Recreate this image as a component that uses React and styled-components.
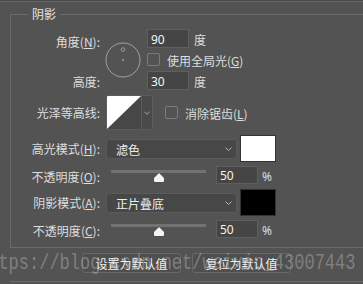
import React from 'react';
import styled, { createGlobalStyle } from 'styled-components';

const Global = createGlobalStyle`
  html, body { margin: 0; padding: 0; background: #535353; }
  body {
    width: 363px; height: 284px; overflow: hidden;
    font-family: "Noto Sans CJK SC", "Noto Sans", sans-serif;
    font-size: 12px; color: #dedede;
  }
  * { box-sizing: border-box; }
`;

const Page = styled.div`
  position: relative;
  width: 363px;
  height: 284px;
  overflow: hidden;
`;

const TopRule = styled.div`
  height: 2px;
  border-top: 1px solid #4a4a4a;
  border-bottom: 1px solid #666666;
`;

const Fieldset = styled.div`
  position: relative;
  margin: 12px 0 0 10px;
  border-top: 1px solid #6b6b6b;
  border-left: 1px solid #6b6b6b;
  border-bottom: 1px solid #6b6b6b;
  padding: 14px 0 9px 0;
`;

const Legend = styled.div`
  position: absolute;
  top: -8px;
  left: 17px;
  padding: 0 4px;
  background: #535353;
  line-height: 14px;
  font-size: 12px;
  color: #e4e4e4;
`;

const AngleGrid = styled.div`
  display: grid;
  grid-template-columns: 89px 41px auto;
  grid-template-rows: 19px 23px 19px;
`;

const Label = styled.div`
  width: 89px;
  flex: none;
  text-align: right;
  white-space: nowrap;
  line-height: ${p => p.$lh || 19}px;
  padding-top: ${p => p.$pt || 0}px;
  color: #dedede;
`;

const GridLabel = styled(Label)`
  grid-column: 1;
  grid-row: ${p => p.$row};
`;

const Key = styled.span`
  text-decoration: underline;
  text-underline-offset: 1px;
`;

const Dial = styled.svg`
  grid-column: 2;
  grid-row: 1 / span 3;
  margin: 13px 0 0 5px;
  display: block;
`;

const GridCell = styled.div`
  grid-column: 3;
  grid-row: ${p => p.$row};
  margin-left: 6px;
  display: flex;
  align-items: center;
`;

const Field = styled.div`
  width: 42px;
  height: ${p => p.$h || 19}px;
  flex: none;
  background: #454545;
  border: 1px solid #5f5f5f;
  color: #f4f4f4;
  font-family: "Noto Sans", sans-serif;
  font-size: 12px;
  line-height: ${p => (p.$h || 19) - 2}px;
  padding: 1px 0 0 3px;
`;

const Unit = styled.span`
  margin-left: ${p => p.$ml || 5}px;
  padding-top: 3px;
  line-height: 16px;
  color: #dedede;
`;

const Check = styled.div`
  width: 13px;
  height: 13px;
  flex: none;
  border: 1px solid #7c7c7c;
  border-radius: 2px;
  margin-left: ${p => p.$ml || 0}px;
`;

const CheckText = styled.span`
  margin-left: 7px;
  padding-top: 2px;
  white-space: nowrap;
`;

const Row = styled.div`
  display: flex;
  align-items: center;
  height: ${p => p.$h}px;
  margin-top: ${p => p.$mt}px;
`;

const Contour = styled.div`
  margin-left: 6px;
  width: 47px;
  height: 35px;
  display: flex;
  border: 1px solid #5c5c5c;
  border-radius: 2px;
  overflow: hidden;
  flex: none;
`;

const ContourPreview = styled.svg`
  display: block;
  width: 34px;
  height: 33px;
`;

const ContourDrop = styled.div`
  flex: 1;
  display: flex;
  align-items: center;
  justify-content: center;
  border-left: 1px solid #5c5c5c;
  background: #4a4a4a;
`;

const Select = styled.div`
  margin-left: 6px;
  width: 131px;
  height: 20px;
  flex: none;
  display: flex;
  align-items: center;
  justify-content: space-between;
  padding: 0 4px 0 9px;
  background: #474747;
  border: 1px solid #5a5a5a;
  border-radius: 3px;
  color: #ececec;
`;

const SelectText = styled.span`
  padding-top: 1px;
`;

const Swatch = styled.div`
  margin-left: 3px;
  width: 36px;
  height: 27px;
  flex: none;
  background: ${p => p.$color};
  border: 1px solid #333333;
`;

const Slider = styled.div`
  position: relative;
  margin-left: 11px;
  width: 95px;
  height: 18px;
  flex: none;
`;

const Track = styled.div`
  margin-top: 4px;
  height: 3px;
  background: #727272;
`;

const Thumb = styled.svg`
  position: absolute;
  top: 6px;
  display: block;
`;

const Percent = styled.span`
  margin-left: 4px;
  padding-top: 2px;
  font-family: "Noto Sans", sans-serif;
  color: #dedede;
`;

const Buttons = styled.div`
  display: flex;
  gap: 11px;
  padding-left: 82px;
  margin-top: 5px;
`;

const Button = styled.div`
  width: 99px;
  height: 20px;
  display: flex;
  align-items: center;
  justify-content: center;
  background: #4f4f4f;
  border: 1px solid #686868;
  border-radius: 3px;
  color: #f2f2f2;
  padding-top: 1px;
`;

const BottomRule = styled.div`
  margin: 8px 0 0 10px;
  border-top: 1px solid #6b6b6b;
`;

const Watermark = styled.div`
  position: absolute;
  left: -22px;
  top: 255px;
  font-family: "Liberation Mono", monospace;
  font-size: 17px;
  line-height: 20px;
  white-space: nowrap;
  color: rgba(200, 200, 200, 0.4);
  transform: scaleY(1.3);
  transform-origin: 0 14.5px;
  pointer-events: none;
`;

const Chevron = ({ w = 7 }) => (
  <svg width={w} height="4" viewBox="0 0 7 4">
    <path d="M0.5 0.5 L3.5 3.5 L6.5 0.5" fill="none" stroke="#b4b4b4" strokeWidth="1" />
  </svg>
);

const ThumbIcon = ({ left }) => (
  <Thumb width="12" height="11" viewBox="0 0 12 11" style={{ left }}>
    <path d="M6 0.5 L11.5 6 L11.5 9 Q11.5 10.5 10 10.5 L2 10.5 Q0.5 10.5 0.5 9 L0.5 6 Z" fill="#f4f4f4" stroke="#3a3a3a" strokeWidth="0.8" />
  </Thumb>
);

const OpacityRow = ({ label, mk, value, pos, mt }) => (
  <Row $h={18} $mt={mt}>
    <Label $lh={16} $pt={3}>{label}(<Key>{mk}</Key>):</Label>
    <Slider>
      <Track />
      <ThumbIcon left={pos} />
    </Slider>
    <Field $h={18} style={{ marginLeft: 10 }}>{value}</Field>
    <Percent>%</Percent>
  </Row>
);

const ModeRow = ({ label, mk, mode, color, mt }) => (
  <Row $h={27} $mt={mt}>
    <Label $lh={16} $pt={1}>{label}(<Key>{mk}</Key>):</Label>
    <Select>
      <SelectText>{mode}</SelectText>
      <Chevron />
    </Select>
    <Swatch $color={color} />
  </Row>
);

export default function App() {
  return (
    <Page>
      <Global />
      <TopRule />
      <Fieldset>
        <Legend>阴影</Legend>
        <AngleGrid>
          <GridLabel $row="1 / span 2" $lh={14} $pt={6}>角度(<Key>N</Key>):</GridLabel>
          <Dial width="36" height="36" viewBox="0 0 36 36">
            <circle cx="18" cy="18" r="17" fill="none" stroke="#a2a2a2" strokeWidth="1" />
            <circle cx="18" cy="7.5" r="1.8" fill="none" stroke="#a2a2a2" strokeWidth="0.9" />
            <circle cx="18" cy="18" r="1" fill="#a2a2a2" />
          </Dial>
          <GridCell $row={1}>
            <Field>90</Field>
            <Unit>度</Unit>
          </GridCell>
          <GridCell $row={2}>
            <Check />
            <CheckText>使用全局光(<Key>G</Key>)</CheckText>
          </GridCell>
          <GridLabel $row={3} $lh={16} $pt={3}>高度:</GridLabel>
          <GridCell $row={3}>
            <Field>30</Field>
            <Unit>度</Unit>
          </GridCell>
        </AngleGrid>

        <Row $h={35} $mt={5}>
          <Label $lh={16} $pt={1}>光泽等高线:</Label>
          <Contour>
            <ContourPreview viewBox="0 0 34 33" preserveAspectRatio="none">
              <rect x="0" y="0" width="34" height="33" fill="#474747" />
              <polygon points="0,0 34,0 0,33" fill="#ffffff" />
            </ContourPreview>
            <ContourDrop>
              <Chevron w={6} />
            </ContourDrop>
          </Contour>
          <Check $ml={12} />
          <CheckText>消除锯齿(<Key>L</Key>)</CheckText>
        </Row>

        <ModeRow label="高光模式" mk="H" mode="滤色" color="#ffffff" mt={5} />
        <OpacityRow label="不透明度" mk="O" value="50" pos={42} mt={4} />
        <ModeRow label="阴影模式" mk="A" mode="正片叠底" color="#000000" mt={5} />
        <OpacityRow label="不透明度" mk="C" value="50" pos={42} mt={4} />
      </Fieldset>

      <Buttons>
        <Button>设置为默认值</Button>
        <Button>复位为默认值</Button>
      </Buttons>
      <BottomRule />
      <Watermark>https://blog.csdn.net/weixin_43007443</Watermark>
    </Page>
  );
}
